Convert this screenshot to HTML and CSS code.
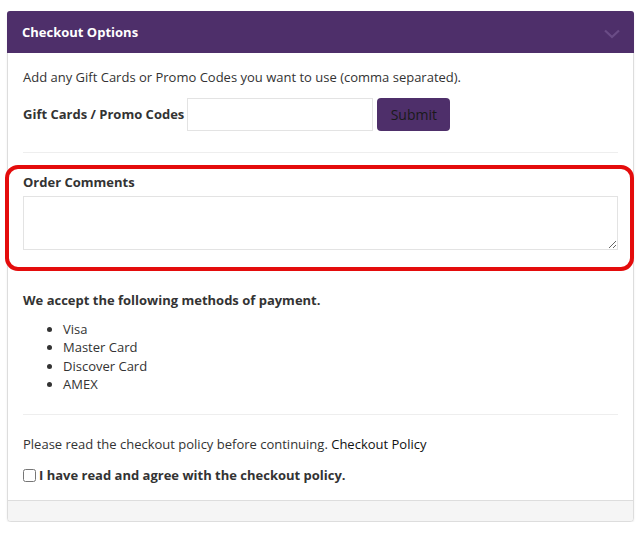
FILE: index.html
```html
<!DOCTYPE html>
<html lang="en">
<head>
  <meta charset="UTF-8" />
  <title>Checkout Options</title>
  <link rel="stylesheet" href="styles.css">
</head>
<body>
  <div class="panel">
    <!-- panel header -->
    <div class="panel-heading">
      <span class="panel-title">Checkout Options</span>
      <svg class="chevron" width="16" height="10" viewBox="0 0 16 10">
        <polyline points="1,1.5 8,8 15,1.5" fill="none" stroke="#6a4c86" stroke-width="2.2" />
      </svg>
    </div>

    <div class="panel-body">
      <p class="hint">Add any Gift Cards or Promo Codes you want to use (comma separated).</p>
      <div class="promo-row">
        <label class="bold-label" for="promo">Gift Cards / Promo Codes</label>
        <input type="text" id="promo" class="promo-input">
        <button class="btn-submit" type="button">Submit</button>
      </div>

      <hr>

      <!-- highlighted comments group -->
      <div class="comments-group">
        <label class="bold-label" for="comments">Order Comments</label>
        <textarea id="comments" class="comments"></textarea>
      </div>

      <p class="bold-label payment-title">We accept the following methods of payment.</p>
      <ul class="payment-list">
        <li>Visa</li>
        <li>Master Card</li>
        <li>Discover Card</li>
        <li>AMEX</li>
      </ul>

      <hr>

      <p class="policy">Please read the checkout policy before continuing. <a href="#">Checkout Policy</a></p>
      <div class="agree-row">
        <input type="checkbox" id="agree">
        <label class="bold-label" for="agree">I have read and agree with the checkout policy.</label>
      </div>
    </div>

    <div class="panel-footer"></div>
  </div>
</body>
</html>
```

FILE: styles.css
```css
body {
  margin: 0;
  padding: 11px 10px 0 7px;
  font-family: "Open Sans", "Liberation Sans", sans-serif;
  font-size: 13px;
  line-height: 18.5px;
  color: #333;
  background: #fff;
}

.panel {
  border: 1px solid #ddd;
  border-radius: 4px;
  box-shadow: 0 1px 2px rgba(0, 0, 0, 0.08);
  background: #fff;
}

.panel-heading {
  display: flex;
  justify-content: space-between;
  align-items: center;
  height: 42px;
  padding: 0 15px;
  background-color: #4e2f6a;
  border-radius: 3px 3px 0 0;
  margin: -1px -1px 0;
}

.panel-title {
  color: #fff;
  font-weight: bold;
  font-size: 13px;
}

.chevron {
  margin-top: 4px;
  margin-right: -1px;
}

.panel-body {
  padding: 15px 15px 15px;
}

p {
  margin: 0;
}

.bold-label {
  font-weight: bold;
}

.promo-row {
  display: flex;
  align-items: center;
  margin-top: 11px;
}

.promo-input {
  width: 186px;
  height: 33px;
  box-sizing: border-box;
  border: 1px solid #e3e3e3;
  margin: 0 4px 0 3px;
  font: inherit;
}

.btn-submit {
  width: 73px;
  height: 33px;
  background-color: #4e2f6a;
  border: none;
  border-radius: 4px;
  color: #1a1a1a;
  font-family: inherit;
  font-size: 14px;
  padding: 0;
}

hr {
  border: 0;
  border-top: 1px solid #eee;
  margin: 21px 0 0;
}

.comments-group {
  margin: 12px -16px 0 -18px;
  padding: 4px 12px 17px 14px;
  border: 4px solid #e40c0c;
  border-radius: 13px;
}

.comments {
  display: block;
  width: 100%;
  height: 54px;
  box-sizing: border-box;
  margin-top: 5px;
  border: 1px solid #e3e3e3;
  font: inherit;
}

.payment-title {
  margin-top: 20px;
}

.payment-list {
  margin: 10px 0 0;
  padding-left: 40px;
}

.payment-list + hr {
  margin-top: 20px;
}

.policy {
  margin-top: 20px;
}

.policy a {
  color: #111;
  text-decoration: none;
}

.agree-row {
  display: flex;
  align-items: center;
  margin-top: 13px;
}

.agree-row input {
  margin: 0 3px 0 0;
  width: 13px;
  height: 13px;
}

.panel-footer {
  height: 20px;
  background: #f5f5f5;
  border-top: 1px solid #ddd;
  border-radius: 0 0 3px 3px;
}
```
